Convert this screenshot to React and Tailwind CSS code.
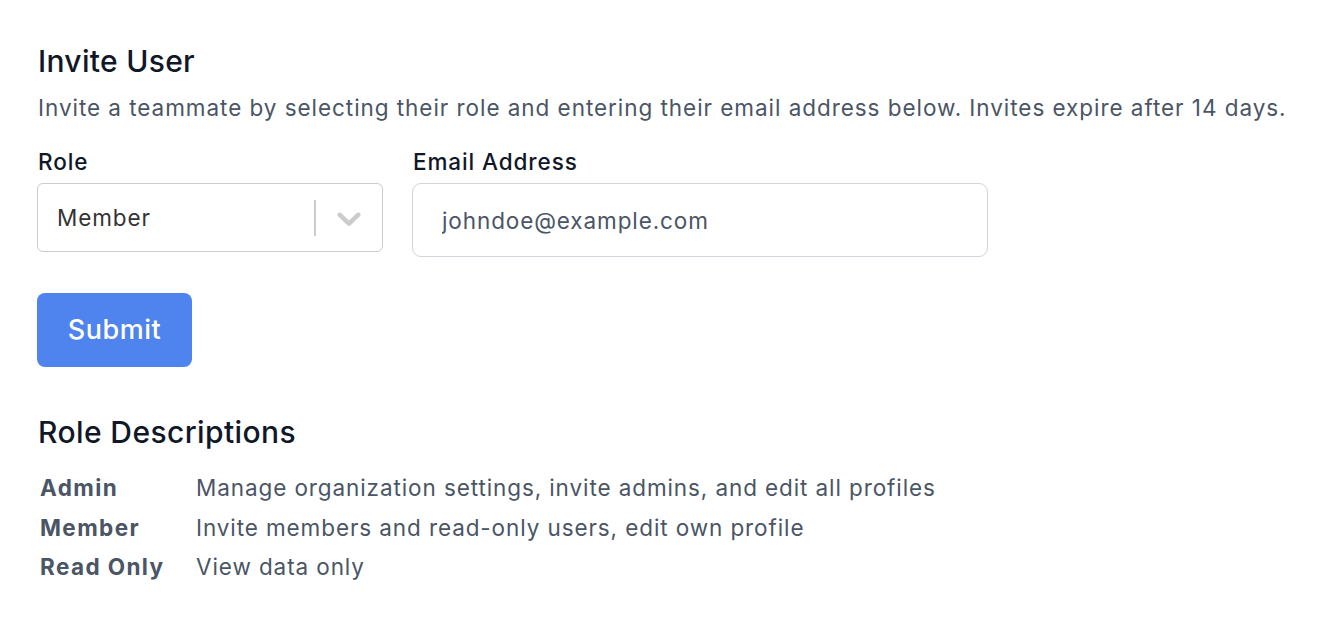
import { useState } from "react";

const roles = [
  { name: "Admin", desc: "Manage organization settings, invite admins, and edit all profiles" },
  { name: "Member", desc: "Invite members and read-only users, edit own profile" },
  { name: "Read Only", desc: "View data only" },
];

const App = () => {
  const [email, setEmail] = useState("");

  return (
    <div className="min-h-screen bg-white px-[37px] pt-[41px] font-['Inter',sans-serif]">
      <h1 className="pl-px text-[30px] leading-[40px] font-medium tracking-[0.3px] text-gray-900">Invite User</h1>
      <p className="mt-[11px] pl-px text-[22.5px] leading-[32px] tracking-[0.95px] text-gray-600">
        Invite a teammate by selecting their role and entering their email address below. Invites expire after 14 days.
      </p>

      <div className="mt-[22px] flex items-start gap-[29px]">
        <div className="w-[346px]">
          <label className="block pl-px text-[22.5px] leading-[32px] font-medium tracking-[0.9px] text-gray-900">Role</label>
          <div className="mt-[5px] flex h-[69px] items-center rounded-[6px] border border-[#cccccc] bg-white pl-[19px]">
            <span className="flex-1 text-[22.5px] tracking-[0.9px] text-[#333333]">Member</span>
            <span className="h-[36px] w-[2px] bg-[#cccccc]" />
            <span className="flex w-[66px] justify-center text-[#cccccc]">
              <svg width="40" height="40" viewBox="0 0 20 20" fill="currentColor">
                <path d="M4.516 7.548c0.436-0.446 1.043-0.481 1.576 0l3.908 3.747 3.908-3.747c0.533-0.481 1.141-0.446 1.574 0 0.436 0.445 0.408 1.197 0 1.615-0.406 0.418-4.695 4.502-4.695 4.502-0.217 0.223-0.502 0.335-0.787 0.335s-0.57-0.112-0.789-0.335c0 0-4.287-4.084-4.695-4.502s-0.436-1.17 0-1.615z" />
              </svg>
            </span>
          </div>
        </div>

        <div className="w-[576px]">
          <label className="block pl-px text-[22.5px] leading-[32px] font-medium tracking-[0.9px] text-gray-900">Email Address</label>
          <input
            type="email"
            value={email}
            onChange={(e) => setEmail(e.target.value)}
            placeholder="johndoe@example.com"
            className="mt-[5px] h-[74px] w-full rounded-[9px] border border-gray-300 px-[29px] text-[22.5px] tracking-[0.9px] text-gray-700 placeholder:text-gray-600 outline-none"
          />
        </div>
      </div>

      <button className="mt-[36px] h-[74px] w-[155px] rounded-[8px] bg-[#4f83ee] text-[27px] font-medium tracking-[0.5px] text-white">
        Submit
      </button>

      <h2 className="mt-[45px] pl-px text-[30px] leading-[40px] font-medium tracking-[0.4px] text-gray-900">Role Descriptions</h2>
      <table className="mt-[16px] text-[22.5px] tracking-[0.9px] text-gray-600">
        <tbody>
          {roles.map((r) => (
            <tr key={r.name}>
              <td className="w-[159px] pl-[3px] leading-[39.5px] font-bold tracking-[1.4px]">{r.name}</td>
              <td className="leading-[39.5px]">{r.desc}</td>
            </tr>
          ))}
        </tbody>
      </table>
    </div>
  );
};

export default App;
